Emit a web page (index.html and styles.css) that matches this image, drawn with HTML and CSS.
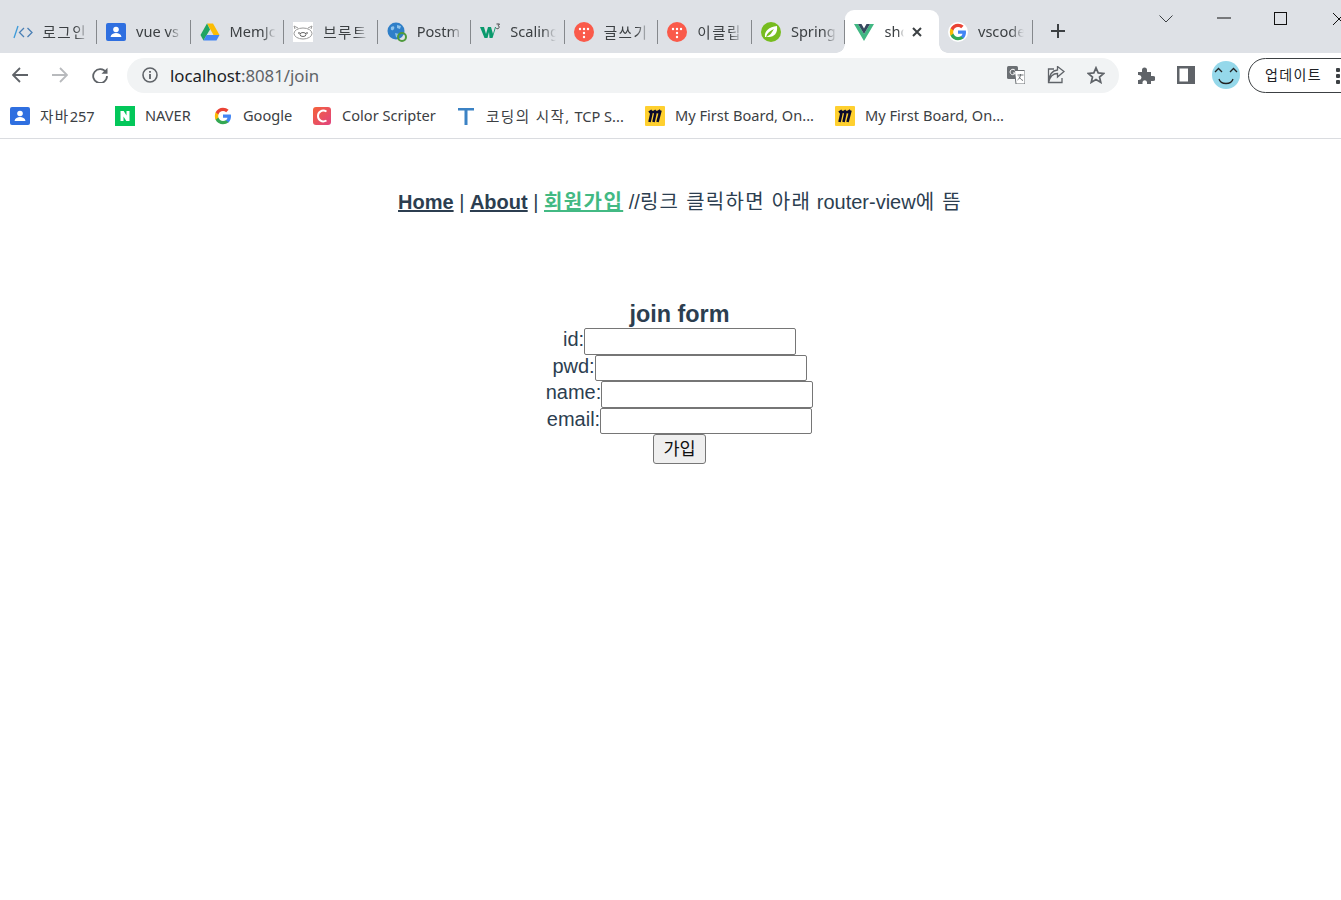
FILE: index.html
```html
<!DOCTYPE html>
<html lang="ko">
<head>
<meta charset="utf-8">
<title>shop</title>
<link rel="stylesheet" href="styles.css">
</head>
<body>
<div class="window">
  <svg class="defs" width="0" height="0">
    <symbol id="person" viewBox="0 0 20 20"><rect width="20" height="18" y="1" rx="2" fill="#2f6fe0"/><circle cx="10" cy="7.5" r="2.8" fill="#fff"/><path d="M4.5 15c.5-3 3-4 5.500-4s5 1 5.500 4z" fill="#fff"/></symbol>
    <symbol id="tistory" viewBox="0 0 20 20"><circle cx="10" cy="10" r="10" fill="#fa5a4a"/><g fill="#fff"><circle cx="6" cy="7" r="1.200"/><circle cx="10" cy="7" r="1.200"/><circle cx="14" cy="7" r="1.200"/><circle cx="10" cy="11" r="1.200"/><circle cx="10" cy="15" r="1.200"/></g></symbol>
    <symbol id="google" viewBox="0 0 20 20"><path d="M18 10.200c0-.6-.1-1.200-.2-1.700H10v3.300h4.500c-.2 1-.8 1.900-1.700 2.500v2.100h2.700c1.600-1.500 2.500-3.600 2.500-6.200z" fill="#4285f4"/><path d="M10 18.300c2.200 0 4.100-.7 5.500-2l-2.700-2.100c-.7.500-1.700.8-2.800.8-2.200 0-4-1.500-4.600-3.400H2.600v2.100c1.400 2.800 4.200 4.600 7.400 4.600z" fill="#34a853"/><path d="M5.400 11.600c-.3-1-.3-2.200 0-3.200V6.300H2.600c-1 1.900-1 5.500 0 7.400z" fill="#fbbc05"/><path d="M10 5c1.200 0 2.300.4 3.200 1.200l2.400-2.400C14.100 2.400 12.200 1.700 10 1.700c-3.200 0-6 1.800-7.400 4.600l2.800 2.100C6 6.500 7.800 5 10 5z" fill="#ea4335"/></symbol>
    <symbol id="miro" viewBox="0 0 20 20"><rect width="20" height="20" rx="1" fill="#ffd02f"/><path d="M7 4.500 4.500 16M11 4.500 8.500 16M15.500 4.500 12.500 16M4 6.500l3-2M8 6.500l3-2M12 6.500l3.500-2" fill="none" stroke="#0c0b2c" stroke-width="2.600"/></symbol>
  </svg>

  <header class="tabstrip">
    <div class="tabs">
      <div class="tab"><svg class="fav" viewBox="0 0 20 20"><path d="M1 16 5 4" stroke="#3b9ad9" stroke-width="1.300" fill="none"/><path d="M11 6 6.500 10.500 11 15M14.500 6l4.500 4.500L14.500 15" stroke="#4a7fb5" stroke-width="1.300" fill="none"/></svg><span class="tab-title ko-ui">로그인</span></div>
      <div class="tab"><svg class="fav"><use href="#person"/></svg><span class="tab-title">vue vs</span></div>
      <div class="tab"><svg class="fav" viewBox="0 0 20 20"><path d="M7 1.500h6l6.500 11.500h-6z" fill="#fbbc04"/><path d="M7 1.500 .5 13l3 5.500L10 7.500z" fill="#1fa463"/><path d="M3.500 18.500h13l3-5.500H6.500z" fill="#4285f4"/></svg><span class="tab-title">MemJc</span></div>
      <div class="tab"><svg class="fav pig" viewBox="0 0 20 20"><rect width="20" height="20" fill="#fff"/><ellipse cx="10" cy="11.500" rx="9" ry="5.500" fill="none" stroke="#999"/><path d="M2 7 1 4l4 2M18 7l1-3-4 2" fill="none" stroke="#999"/><ellipse cx="10" cy="12.500" rx="3" ry="2" fill="none" stroke="#666"/><circle cx="6" cy="11" r=".8" fill="#333"/><circle cx="14" cy="11" r=".8" fill="#333"/></svg><span class="tab-title ko-ui">브루트</span></div>
      <div class="tab"><svg class="fav" viewBox="0 0 20 20"><circle cx="9" cy="9" r="8.500" fill="#2f7fc8"/><path d="M4 5c3-2 4 0 3 2S3 9 4 5zM10 3l4 1-1 3-3-1zM8 11l4 1-1 4-2-1z" fill="#8fc3ea"/><circle cx="15" cy="15" r="4" fill="none" stroke="#4f9a3d" stroke-width="2"/></svg><span class="tab-title">Postm</span></div>
      <div class="tab"><svg class="fav" viewBox="0 0 20 20"><path d="M0 5h4l2 7 2-7h3l2 7 2-7h1l-3.500 11h-3L9 10l-1.500 6h-3z" fill="#0a9a6d"/><path d="M16.500 2h3l-1.300 1.700c1.300.3 1.300 3-.7 3-.7 0-1.200-.3-1.400-.8" fill="none" stroke="#333" stroke-width=".9"/></svg><span class="tab-title">Scaling</span></div>
      <div class="tab"><svg class="fav"><use href="#tistory"/></svg><span class="tab-title ko-ui">글쓰기</span></div>
      <div class="tab"><svg class="fav"><use href="#tistory"/></svg><span class="tab-title ko-ui">이클립</span></div>
      <div class="tab"><svg class="fav" viewBox="0 0 20 20"><circle cx="10" cy="10" r="10" fill="#77bc1f"/><path d="M4 15C3 9 8 5 16 4c1 7-3 11-8 11-1 0-2 0-4 0z" fill="#fff"/><path d="M5 15c1-4 4-6 8-8-2 3-3 6-8 8z" fill="#77bc1f"/></svg><span class="tab-title">Spring</span></div>
      <div class="tab tab-active"><svg class="fav" viewBox="0 0 20 20"><path d="M0 2h4l6 10L16 2h4L10 19z" fill="#41b883"/><path d="M4 2h3.500L10 6.500 12.500 2H16l-6 10z" fill="#35495e"/></svg><span class="tab-title">shop</span><svg class="tab-close" viewBox="0 0 10 10"><path d="M1 1l8 8M9 1 1 9" stroke="#3c4043" stroke-width="2"/></svg></div>
      <div class="tab"><svg class="fav g-round" viewBox="0 0 20 20"><circle cx="10" cy="10" r="10" fill="#fff"/><use href="#google"/></svg><span class="tab-title">vscode</span></div>
    </div>
    <svg class="newtab" viewBox="0 0 16 16"><path d="M8 1v14M1 8h14" stroke="#3c4043" stroke-width="2"/></svg>
    <div class="winctl">
      <svg class="ctl-chev" viewBox="0 0 14 8"><path d="M.5 .5 7 7 13.500 .5" fill="none" stroke="#3c4043"/></svg>
      <svg class="ctl-min" viewBox="0 0 14 2"><path d="M0 1h14" stroke="#111"/></svg>
      <svg class="ctl-max" viewBox="0 0 13 13"><rect x=".5" y=".5" width="12" height="12" fill="none" stroke="#111"/></svg>
      <svg class="ctl-close" viewBox="0 0 14 14"><path d="M1 1l12 12M13 1 1 13" stroke="#111"/></svg>
    </div>
  </header>

  <div class="toolbar">
    <svg class="nav-btn" viewBox="0 0 16 16"><path d="M16 8H1.500M8 1 1 8l7 7" fill="none" stroke="#5f6368" stroke-width="1.800"/></svg>
    <svg class="nav-btn" viewBox="0 0 16 16"><path d="M0 8h14.500M8 1l7 7-7 7" fill="none" stroke="#b8babd" stroke-width="1.800"/></svg>
    <svg class="nav-btn" viewBox="0 0 16 16"><path d="M14 5.500A6.900 6.900 0 1 0 15 9" fill="none" stroke="#5f6368" stroke-width="1.800"/><path d="M15.500 .8v6h-6z" fill="#5f6368"/></svg>
    <div class="omnibox">
      <svg class="info" viewBox="0 0 16 16"><circle cx="8" cy="8" r="7" fill="none" stroke="#5f6368" stroke-width="1.600"/><path d="M8 7v5M8 4v1.800" stroke="#5f6368" stroke-width="1.800"/></svg>
      <span class="url">localhost<span class="url-dim">:8081/join</span></span>
      <div class="omni-actions">
        <svg class="omni-icon" viewBox="0 0 18 18"><rect x="0" y="0" width="11" height="13" rx="1.500" fill="#6b6f73"/><path d="M7.500 4.500h9.500c.5 0 1 .5 1 1V17c0 .5-.5 1-1 1H9z" fill="#fff" stroke="#6b6f73"/><path d="M8 4.400A2.700 2.700 0 1 0 8.300 7H6" fill="none" stroke="#fff" stroke-width="1"/><path d="M10.500 9h6M13.500 8v1c-.3 2.500-1.500 4-3 5M12 10.500c.5 1.500 2.500 3.500 4 4" fill="none" stroke="#6b6f73"/></svg>
        <svg class="omni-icon" viewBox="0 0 18 18"><path d="M7 3H1.500v13.500H15V12M1.500 16.500C3 10 6.500 7.500 10.500 7.500V11L17 5.500 10.500 .5v3.500C5 4.500 2 9.500 1.500 16.500z" fill="none" stroke="#5f6368" stroke-width="1.300"/></svg>
        <svg class="omni-icon" viewBox="0 0 18 18"><path d="M9 1.800 11.200 6.900 16.700 7.400 12.500 11 13.800 16.400 9 13.600 4.200 16.400 5.500 11 1.300 7.400 6.800 6.900z" fill="none" stroke="#5f6368" stroke-width="1.700"/></svg>
      </div>
    </div>
    <svg class="tool-icon" viewBox="0 0 18 18"><path d="M1 6h4V4a2.500 2.500 0 0 1 5 0v2h4v4h2a2.500 2.500 0 0 1 0 5h-2v3H10v-2a2.300 2.300 0 0 0-4.500 0v2H1v-4h1a2.500 2.500 0 0 0 0-5H1z" fill="#5f6368"/></svg>
    <svg class="tool-icon tool-panel" viewBox="0 0 18 18"><path fill-rule="evenodd" d="M0 0h18v18H0zM2.500 2.500v13H11v-13z" fill="#5f6368"/></svg>
    <svg class="avatar" viewBox="0 0 28 28"><circle cx="14" cy="14" r="14" fill="#95d8ea"/><path d="M3 11l3.500-3.500L10 11M18 11l3.500-3.500L25 11M7 18c1 3.500 4 4.500 7 4.500s6-1 7-4.500" fill="none" stroke="#222" stroke-width="1.300"/></svg>
    <div class="update"><span class="update-label ko-ui">업데이트</span><span class="update-dots"><i></i><i></i><i></i></span></div>
  </div>

  <nav class="bookmarks">
    <div class="bm"><svg class="fav"><use href="#person"/></svg><span><span class="ko-ui">자바</span>257</span></div>
    <div class="bm"><svg class="fav" viewBox="0 0 20 20"><rect width="20" height="20" fill="#03c75a"/><path d="M5.500 5h3.200l2.800 4.500V5h3v10h-3.200L8.500 10.500V15h-3z" fill="#fff"/></svg><span>NAVER</span></div>
    <div class="bm"><svg class="fav"><use href="#google"/></svg><span>Google</span></div>
    <div class="bm"><svg class="fav" viewBox="0 0 20 20"><defs><linearGradient id="cs" x1="0" y1="0" x2="1" y2="1"><stop offset="0" stop-color="#f5623a"/><stop offset="1" stop-color="#e0437f"/></linearGradient></defs><rect x="1" y="1" width="18" height="18" rx="3" fill="url(#cs)"/><path d="M14.500 5.500C10 3 6 6 6 10s4 7 8.500 4.500" fill="none" stroke="#fff" stroke-width="2"/></svg><span>Color Scripter</span></div>
    <div class="bm"><svg class="fav" viewBox="0 0 20 20"><path d="M2 2h16v2.500h-6.500V19h-3V4.500H2z" fill="#3b82c4"/></svg><span><span class="ko-ui">코딩의 시작,</span> TCP S...</span></div>
    <div class="bm"><svg class="fav"><use href="#miro"/></svg><span>My First Board, On...</span></div>
    <div class="bm"><svg class="fav"><use href="#miro"/></svg><span>My First Board, On...</span></div>
  </nav>

  <main class="page">
    <div class="site-nav">
      <a class="link" href="#home">Home</a> | <a class="link" href="#about">About</a> | <a class="link link-active" href="#join"><span class="ko">회원가입</span></a> //<span class="ko-tail">링크 클릭하면 아래</span> router-view<span class="ko-tail">에 뜸</span>
    </div>
    <form class="join">
      <h3 class="join-title">join form</h3>
      <div class="row">id:<input class="field" type="text"></div>
      <div class="row">pwd:<input class="field" type="text"></div>
      <div class="row">name:<input class="field" type="text"></div>
      <div class="row">email:<input class="field" type="text"></div>
      <button class="submit" type="button">가입</button>
    </form>
  </main>
</div>
</body>
</html>
```
FILE: styles.css
```css
html, body { margin: 0; padding: 0; background: #fff; overflow: hidden; height: 100%; }
.window { width: 1359px; height: 900px; overflow: hidden; font-family: "Noto Sans", "Noto Sans CJK KR", sans-serif; color: #3c4043; }
.defs { position: absolute; }
.fav { width: 20px; height: 20px; flex: none; display: block; }
.ko-ui { letter-spacing: 1.400px; }

.tabstrip { height: 53px; background: #dee1e6; display: flex; align-items: flex-end; }
.tabs { display: grid; grid-template-columns: repeat(11, 93.550px); margin-left: 3.500px; height: 43px; }
.tab { position: relative; display: flex; align-items: center; padding-left: 9px; gap: 10px; font-size: 14.600px; min-width: 0; }
.tab::after { content: ""; position: absolute; right: 0; top: 10px; height: 24px; width: 1px; background: #85888c; }
.tab-active { background: #fff; border-radius: 9px 9px 0 0; }
.tab-active::before, .tab-active::after { content: ""; display: block; position: absolute; top: auto; bottom: 0; width: 9px; height: 9px; background: radial-gradient(circle at 0 0, transparent 8.500px, #fff 9px); }
.tab-active::before { left: -9px; }
.tab-active::after { right: -9px; left: auto; background: radial-gradient(circle at 100% 0, transparent 8.500px, #fff 9px); }
.tab-title { width: 46px; overflow: hidden; white-space: nowrap; flex: none; padding-bottom: 1px; -webkit-mask-image: linear-gradient(90deg, #000 70%, transparent); mask-image: linear-gradient(90deg, #000 70%, transparent); }
.tab-active .tab-title { width: 20px; }
.tab-close { width: 10px; height: 10px; flex: none; margin-left: -2px; }
.newtab { width: 16px; height: 16px; margin: 0 0 14px 17px; flex: none; }
.winctl { position: relative; flex: 1; align-self: stretch; }
.winctl svg { position: absolute; }
.ctl-chev { left: 93px; top: 15px; width: 14px; height: 8px; }
.ctl-min { left: 151px; top: 17px; width: 14px; height: 2px; }
.ctl-max { left: 208px; top: 12px; width: 13px; height: 13px; }
.ctl-close { left: 266px; top: 12px; width: 14px; height: 14px; }

.toolbar { height: 44px; display: flex; align-items: center; padding-left: 12px; }
.nav-btn { width: 16px; height: 16px; margin-right: 24px; flex: none; }
.nav-btn:nth-of-type(3) { margin-right: 19px; }
.omnibox { width: 992px; height: 35px; border-radius: 18px; background: #f1f3f4; display: flex; align-items: center; padding-left: 15px; box-sizing: border-box; flex: none; }
.info { width: 16px; height: 16px; flex: none; }
.url { margin-left: 12px; font-size: 16.800px; color: #202124; }
.url-dim { color: #5f6368; }
.omni-actions { margin-left: auto; display: flex; gap: 22px; padding-right: 14px; }
.omni-icon { width: 18px; height: 18px; flex: none; }
.tool-icon { width: 18px; height: 18px; flex: none; margin-left: 18px; }
.tool-panel { margin-left: 22px; }
.avatar { width: 28px; height: 28px; margin-left: 17px; flex: none; }
.update { margin-left: 8px; width: 111px; height: 35px; box-sizing: border-box; border: 1.500px solid #3c4043; border-radius: 18px; display: flex; align-items: center; padding-left: 16px; flex: none; font-size: 14px; color: #202124; }
.update-label { width: 71px; white-space: nowrap; padding-bottom: 2px; }
.update-dots { display: flex; flex-direction: column; gap: 2px; margin-top: 1px; }
.update-dots i { width: 4px; height: 4px; background: #3c4043; display: block; border-radius: 1px; }

.bookmarks { height: 42px; box-sizing: border-box; border-bottom: 1px solid #dadce0; padding-bottom: 3px; display: grid; grid-template-columns: 105px 98px 99px 144px 189px 190px auto; padding-left: 10px; align-items: center; font-size: 14.600px; }
.bm { display: flex; align-items: center; gap: 10px; white-space: nowrap; }
.bm > span { padding-bottom: 2px; }

.page { font-family: "Liberation Sans", "Noto Sans CJK KR", sans-serif; font-size: 20px; color: #2c3e50; text-align: center; }
.site-nav { padding: 51px 0 0 1px; line-height: 24px; }
.link { font-weight: bold; color: #2c3e50; }
.link-active { color: #42b983; }
.ko { letter-spacing: 1.400px; }
.ko-tail { letter-spacing: 1.300px; }
.join { margin-top: 87px; }
.join-title { margin: 0; font-size: 23.400px; line-height: 27px; }
.row { height: 26.500px; line-height: 23px; }
.field { width: 212px; height: 26.500px; box-sizing: border-box; vertical-align: top; margin: 0; padding: 1px 2px; border: 1px solid #767676; border-radius: 2px; background: #fff; font-size: 16px; }
.submit { display: inline-block; vertical-align: top; width: 53px; height: 30px; padding: 0 0 4px; margin: 0; font-family: "Noto Sans CJK KR", sans-serif; font-size: 17.500px; color: #111; background: #efefef; border: 1px solid #767676; border-radius: 3px; }
```
